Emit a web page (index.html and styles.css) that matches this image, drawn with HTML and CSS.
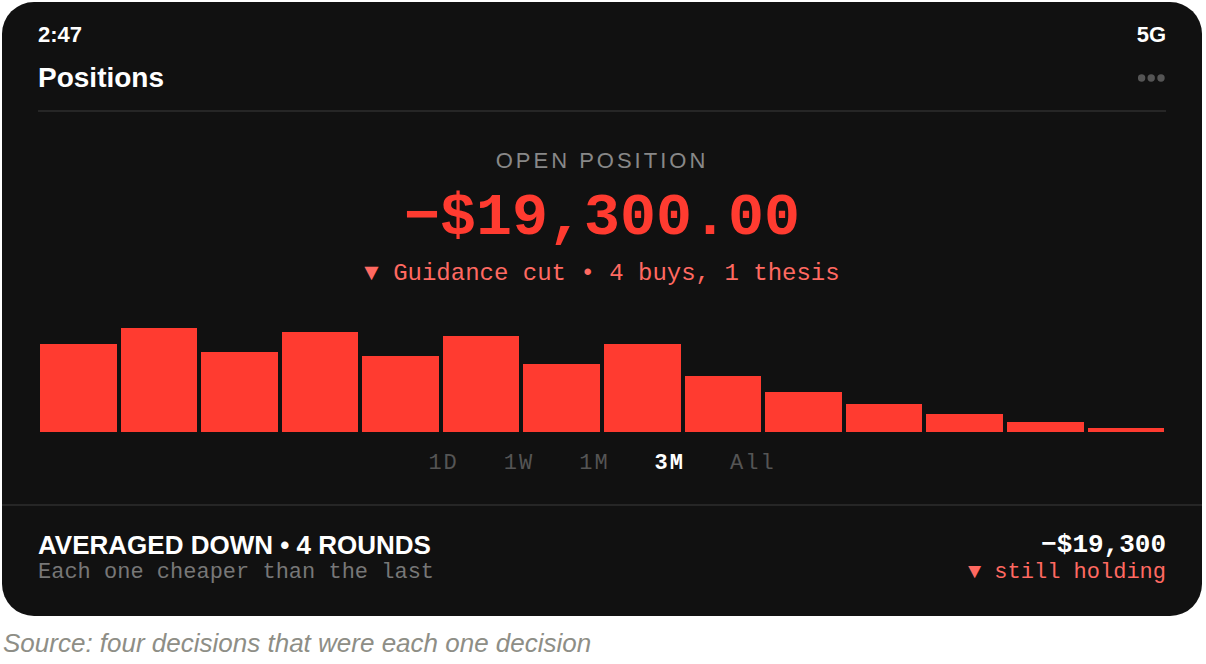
FILE: index.html
```html
<!DOCTYPE html>
<html lang="en">
<head>
    <meta charset="UTF-8">
    <meta name="viewport" content="width=device-width, initial-scale=1.0">
    <title>Positions</title>
    <link rel="stylesheet" href="styles.css">
</head>
<body>
    <figure>
        <main class="card">
            <div class="status-bar">
                <span>2:47</span>
                <span>5G</span>
            </div>
            <header class="title-bar">
                <h1>Positions</h1>
                <button type="button" class="more" aria-label="More">
                    <svg width="28" height="8" viewBox="0 0 28 8" fill="currentColor" aria-hidden="true">
                        <circle cx="3.6" cy="4" r="3.7"/>
                        <circle cx="13.2" cy="4" r="3.7"/>
                        <circle cx="23" cy="4" r="3.7"/>
                    </svg>
                </button>
            </header>
            <section class="position">
                <p class="label">OPEN POSITION</p>
                <p class="amount">−$19,300.00</p>
                <p class="note">▼ Guidance cut • 4 buys, 1 thesis</p>
            </section>
            <div class="chart">
                <div class="bar" style="height: 88px"></div>
                <div class="bar" style="height: 104px"></div>
                <div class="bar" style="height: 80px"></div>
                <div class="bar" style="height: 100px"></div>
                <div class="bar" style="height: 76px"></div>
                <div class="bar" style="height: 96px"></div>
                <div class="bar" style="height: 68px"></div>
                <div class="bar" style="height: 88px"></div>
                <div class="bar" style="height: 56px"></div>
                <div class="bar" style="height: 40px"></div>
                <div class="bar" style="height: 28px"></div>
                <div class="bar" style="height: 18px"></div>
                <div class="bar" style="height: 10px"></div>
                <div class="bar" style="height: 4px"></div>
            </div>
            <nav class="ranges">
                <button type="button">1D</button>
                <button type="button">1W</button>
                <button type="button">1M</button>
                <button type="button" class="active">3M</button>
                <button type="button">All</button>
            </nav>
            <footer class="holding">
                <div>
                    <h2>AVERAGED DOWN • 4 ROUNDS</h2>
                    <p>Each one cheaper than the last</p>
                </div>
                <div class="result">
                    <p class="total">−$19,300</p>
                    <p class="loss">▼ still holding</p>
                </div>
            </footer>
        </main>
        <figcaption>Source: four decisions that were each one decision</figcaption>
    </figure>
</body>
</html>
```

FILE: styles.css
```css
/* General Styling */
body {
    font-family: 'Liberation Sans', Arial, sans-serif;
    margin: 0;
    padding: 2px 4px 0 2px;
    background-color: #ffffff;
    color: white;
}

figure,
h1,
h2,
p {
    margin: 0;
}

button {
    padding: 0;
    border: none;
    background: none;
    font: inherit;
    color: inherit;
    letter-spacing: inherit;
    cursor: pointer;
}

.card {
    background-color: #111111;
    border-radius: 32px;
    overflow: hidden;
}

/* Top of the screen */
.status-bar {
    display: flex;
    justify-content: space-between;
    padding: 20px 36px 0;
    font-size: 22px;
    font-weight: bold;
    line-height: 26px;
}

.title-bar {
    display: flex;
    justify-content: space-between;
    align-items: center;
    margin: 0 36px;
    padding: 14px 0 16px;
    border-bottom: 2px solid #262626;
}

h1 {
    font-size: 28px;
    line-height: 32px;
}

.more {
    display: flex;
    color: #555555;
}

/* Open position */
.position {
    padding: 36px 36px 0;
    text-align: center;
}

.label {
    font-size: 22px;
    line-height: 26px;
    letter-spacing: 3px;
    color: #888888;
}

.amount {
    margin-top: 10px;
    font-family: 'Liberation Mono', 'Courier New', monospace;
    font-size: 60px;
    font-weight: bold;
    line-height: 68px;
    color: #ff3b30;
}

.note {
    margin-top: 8px;
    font-family: 'Liberation Mono', 'Courier New', monospace;
    font-size: 24px;
    line-height: 28px;
    color: #ff6961;
}

/* Chart */
.chart {
    display: flex;
    align-items: flex-end;
    gap: 4px;
    height: 120px;
    margin: 24px 36px 0;
    padding: 0 2px;
}

.bar {
    flex: 1;
    background-color: #ff3b30;
}

.ranges {
    display: flex;
    justify-content: center;
    gap: 45px;
    padding: 20px 36px 28px;
    font-family: 'Liberation Mono', 'Courier New', monospace;
    font-size: 22px;
    line-height: 24px;
    letter-spacing: 2px;
    color: #555555;
}

.ranges .active {
    color: white;
    font-weight: bold;
}

/* Summary row */
.holding {
    display: flex;
    justify-content: space-between;
    padding: 24px 36px 30px;
    border-top: 2px solid #262626;
    font-family: 'Liberation Mono', 'Courier New', monospace;
    font-size: 22px;
    line-height: 26px;
    color: #777777;
}

h2 {
    font-family: 'Liberation Sans', Arial, sans-serif;
    font-size: 26px;
    line-height: 30px;
    color: white;
}

.result {
    text-align: right;
}

.total {
    font-size: 26px;
    font-weight: bold;
    line-height: 30px;
    color: white;
}

.loss {
    color: #ff6961;
}

figcaption {
    padding: 12px 1px 0;
    font-size: 26px;
    font-style: italic;
    line-height: 30px;
    color: #8e8e86;
}
```
